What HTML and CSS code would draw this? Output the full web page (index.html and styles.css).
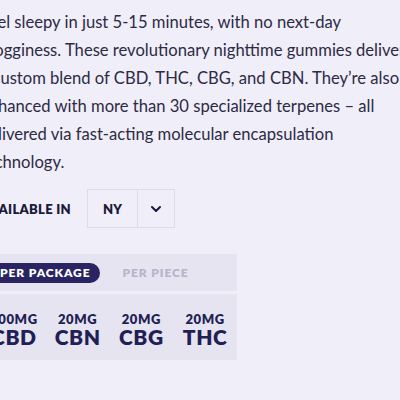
FILE: index.html
```html
<!DOCTYPE html>
<html lang="en">
<head>
<meta charset="utf-8">
<link rel="stylesheet" href="styles.css">
</head>
<body>
<div class="page">
  <p class="desc">Feel sleepy in just 5-15 minutes, with no next-day grogginess. These revolutionary nighttime gummies deliver a custom blend of CBD, THC, CBG, and CBN. They’re also enhanced with more than 30 specialized terpenes – all delivered via fast-acting molecular encapsulation technology.</p>
  <div class="avail">
    <span class="avail-label">Available in</span>
    <div class="select">
      <span class="select-value">NY</span>
      <span class="select-arrow"><svg width="12" height="8" viewBox="0 0 12 8"><path d="M2 2 L6 6 L10 2" fill="none" stroke="#1c1a3a" stroke-width="2" stroke-linecap="round" stroke-linejoin="round"/></svg></span>
    </div>
  </div>
  <div class="dosage">
    <div class="tabs">
      <span class="tab active">Per package</span>
      <span class="tab">Per piece</span>
    </div>
    <div class="values">
      <div class="val"><span class="amt">100mg</span><span class="name">CBD</span></div>
      <div class="val"><span class="amt">20mg</span><span class="name">CBN</span></div>
      <div class="val"><span class="amt">20mg</span><span class="name">CBG</span></div>
      <div class="val"><span class="amt">20mg</span><span class="name">THC</span></div>
    </div>
  </div>
</div>
</body>
</html>
```
FILE: styles.css
```css
html, body {
  margin: 0;
  padding: 0;
  background: #f0eef8;
  overflow: hidden;
}
body {
  font-family: Lato, "Noto Sans", sans-serif;
  color: #2d2a45;
}
.page {
  margin-left: -20px;
  padding-top: 8px;
  width: 440px;
}
.desc {
  margin: 0;
  font-size: 16.6px;
  line-height: 28px;
  width: 430px;
}
.avail {
  display: flex;
  align-items: center;
  gap: 16px;
  margin-top: 13px;
  padding-left: 1px;
}
.avail-label {
  font-size: 13px;
  font-weight: 800;
  text-transform: uppercase;
  color: #1c1a3a;
  letter-spacing: 0.3px;
}
.select {
  display: flex;
  height: 37px;
  border: 1px solid #dedbe9;
}
.select-value {
  width: 49px;
  display: flex;
  align-items: center;
  justify-content: center;
  font-size: 13px;
  font-weight: 800;
  color: #1c1a3a;
  border-right: 1px solid #dedbe9;
}
.select-arrow {
  width: 36px;
  display: flex;
  align-items: center;
  justify-content: center;
}
.dosage {
  margin-top: 26px;
  margin-left: 2px;
  width: 255px;
  display: flex;
  flex-direction: column;
  gap: 3px;
}
.tabs {
  background: #e6e4f1;
  height: 37px;
  padding: 0 8px;
  display: flex;
  align-items: center;
}
.tab {
  padding: 0 10px;
  height: 20px;
  line-height: 20px;
  border-radius: 10px;
  font-size: 12px;
  font-weight: 800;
  letter-spacing: 0.9px;
  text-transform: uppercase;
  color: #b7b5cb;
}
.tab + .tab {
  margin-left: 12px;
}
.tab.active {
  background: #2a2462;
  color: #ffffff;
}
.values {
  background: #e6e4f1;
  height: 66px;
  display: flex;
  align-items: center;
  padding-top: 4px;
  box-sizing: border-box;
}
.val {
  flex: 1;
  display: flex;
  flex-direction: column;
  align-items: center;
  color: #221f55;
  font-weight: 800;
  text-transform: uppercase;
}
.amt {
  font-size: 13px;
  line-height: 14px;
  letter-spacing: 0.6px;
}
.name {
  font-size: 21px;
  line-height: 21px;
  letter-spacing: 0.6px;
}
```
